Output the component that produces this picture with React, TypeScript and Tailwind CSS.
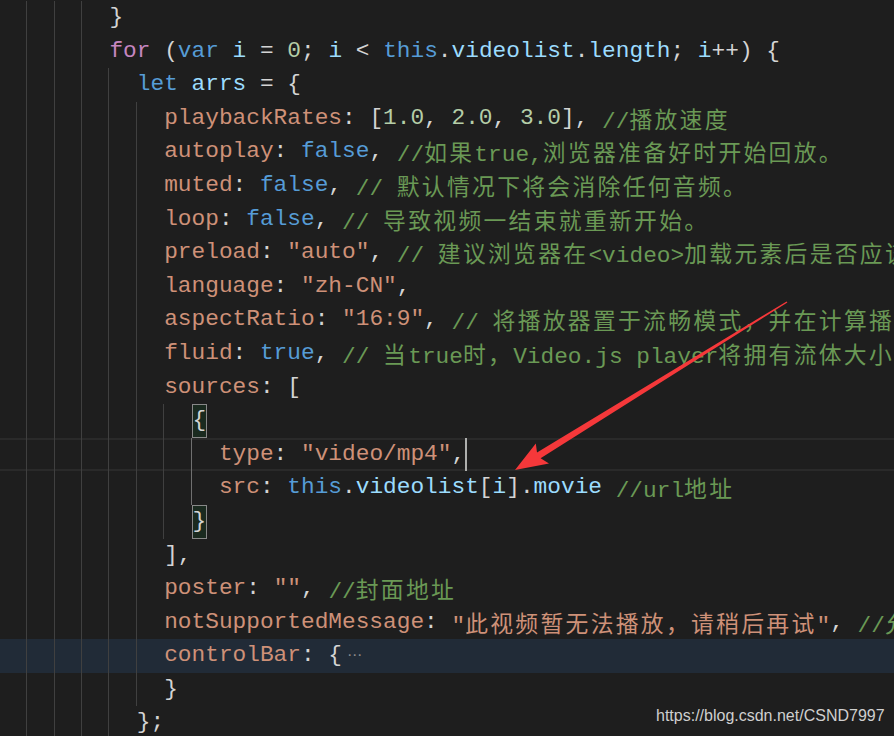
import React from "react";

const P = "text-[#d4d4d4]";
const K = "text-[#ce9178]";
const S = "text-[#ce9178]";
const B = "text-[#569cd6]";
const F = "text-[#c586c0]";
const V = "text-[#9cdcfe]";
const N = "text-[#b5cea8]";
const C = "text-[#6a9955]";

type Tok = [string, string];

type Line = {
  indent: number; // in 2-space levels
  toks: Tok[];
  activeGuide?: number; // level index of active guide
  current?: boolean;
  folded?: boolean;
  bracketBox?: string;
  cursor?: boolean;
};

const CJK_RE = /([\u3000-\u303f\u4e00-\u9fff\uff00-\uffef]+)/;

function renderText(text: string) {
  const parts = text.split(CJK_RE);
  return parts.map((p, i) =>
    CJK_RE.test(p) ? (
      <span
        key={i}
        className="tracking-[2.3px] font-['Noto_Sans_CJK_SC','Liberation_Mono',sans-serif]"
      >
        {p}
      </span>
    ) : (
      <React.Fragment key={i}>{p}</React.Fragment>
    )
  );
}

const lines: Line[] = [
  { indent: 4, toks: [[P, "}"]] },
  {
    indent: 4,
    toks: [
      [F, "for"],
      [P, " ("],
      [B, "var"],
      [P, " "],
      [V, "i"],
      [P, " = "],
      [N, "0"],
      [P, "; "],
      [V, "i"],
      [P, " < "],
      [B, "this"],
      [P, "."],
      [V, "videolist"],
      [P, "."],
      [V, "length"],
      [P, "; "],
      [V, "i"],
      [P, "++) {"],
    ],
  },
  {
    indent: 5,
    toks: [
      [B, "let"],
      [P, " "],
      [V, "arrs"],
      [P, " = {"],
    ],
  },
  {
    indent: 6,
    toks: [
      [K, "playbackRates"],
      [P, ": ["],
      [N, "1.0"],
      [P, ", "],
      [N, "2.0"],
      [P, ", "],
      [N, "3.0"],
      [P, "], "],
      [C, "//播放速度"],
    ],
  },
  {
    indent: 6,
    toks: [
      [K, "autoplay"],
      [P, ": "],
      [B, "false"],
      [P, ", "],
      [C, "//如果true,浏览器准备好时开始回放。"],
    ],
  },
  {
    indent: 6,
    toks: [
      [K, "muted"],
      [P, ": "],
      [B, "false"],
      [P, ", "],
      [C, "// 默认情况下将会消除任何音频。"],
    ],
  },
  {
    indent: 6,
    toks: [
      [K, "loop"],
      [P, ": "],
      [B, "false"],
      [P, ", "],
      [C, "// 导致视频一结束就重新开始。"],
    ],
  },
  {
    indent: 6,
    toks: [
      [K, "preload"],
      [P, ": "],
      [S, '"auto"'],
      [P, ", "],
      [C, "// 建议浏览器在<video>加载元素后是否应该开始下载视频数据。"],
    ],
  },
  {
    indent: 6,
    toks: [
      [K, "language"],
      [P, ": "],
      [S, '"zh-CN"'],
      [P, ","],
    ],
  },
  {
    indent: 6,
    toks: [
      [K, "aspectRatio"],
      [P, ": "],
      [S, '"16:9"'],
      [P, ", "],
      [C, "// 将播放器置于流畅模式，并在计算播放器的动态大小时使用该值。"],
    ],
  },
  {
    indent: 6,
    toks: [
      [K, "fluid"],
      [P, ": "],
      [B, "true"],
      [P, ", "],
      [C, "// 当true时，Video.js player将拥有流体大小。换句话说，它将按比例缩放以适应其容器。"],
    ],
  },
  {
    indent: 6,
    toks: [
      [K, "sources"],
      [P, ": ["],
    ],
  },
  { indent: 7, toks: [], bracketBox: "{" },
  {
    indent: 8,
    activeGuide: 7,
    current: true,
    cursor: true,
    toks: [
      [K, "type"],
      [P, ": "],
      [S, '"video/mp4"'],
      [P, ","],
    ],
  },
  {
    indent: 8,
    activeGuide: 7,
    toks: [
      [K, "src"],
      [P, ": "],
      [B, "this"],
      [P, "."],
      [V, "videolist"],
      [P, "["],
      [V, "i"],
      [P, "]."],
      [V, "movie"],
      [P, " "],
      [C, "//url地址"],
    ],
  },
  { indent: 7, toks: [], bracketBox: "}" },
  { indent: 6, toks: [[P, "],"]] },
  {
    indent: 6,
    toks: [
      [K, "poster"],
      [P, ": "],
      [S, '""'],
      [P, ", "],
      [C, "//封面地址"],
    ],
  },
  {
    indent: 6,
    toks: [
      [K, "notSupportedMessage"],
      [P, ": "],
      [S, '"此视频暂无法播放，请稍后再试"'],
      [P, ", "],
      [C, "//允许覆盖Video.js无法播放媒体源时显示的默认信息。"],
    ],
  },
  {
    indent: 6,
    folded: true,
    toks: [
      [K, "controlBar"],
      [P, ": {"],
    ],
  },
  { indent: 6, toks: [[P, "}"]] },
  { indent: 5, toks: [[P, "};"]] },
];

function CodeLine({ line }: { line: Line }) {
  const rowCls = [
    "flex shrink-0 h-[33.6px] leading-[33.6px] whitespace-pre",
    line.current ? "shadow-[inset_0_2px_0_#2a2a2a,inset_0_-2px_0_#2a2a2a]" : "",
    line.folded ? "bg-[#212b37]" : "",
  ].join(" ");
  const guides = [];
  for (let lv = 0; lv < line.indent; lv++) {
    const active = line.activeGuide === lv;
    guides.push(
      <span
        key={lv}
        className={
          lv === 0
            ? "inline-block shrink-0 w-[2ch] h-full"
            : active
            ? "inline-block shrink-0 w-[2ch] h-full border-l border-[#707070] -ml-px mr-px"
            : "inline-block shrink-0 w-[2ch] h-full border-l border-[#404040] -ml-px mr-px"
        }
      />
    );
  }
  return (
    <div className={rowCls}>
      {guides}
      {line.bracketBox && (
        <span className="inline-block h-full border border-[#888888] bg-[#1a2a1f] leading-[31.6px] text-[#d4d4d4]">
          {line.bracketBox}
        </span>
      )}
      {line.toks.map(([cls, t], i) => (
        <span key={i} className={cls}>
          {renderText(t)}
        </span>
      ))}
      {line.cursor && <span className="inline-block w-[2px] h-full bg-[#aeafad]" />}
      {line.folded && (
        <span className="text-[#8a8a8a] text-[15px] ml-[5px] font-['DejaVu_Sans',sans-serif]">⋯</span>
      )}
    </div>
  );
}

export default function App() {
  return (
    <div className="relative w-[894px] h-[736px] overflow-hidden bg-[#1e1e1e] font-['Liberation_Mono','Noto_Sans_CJK_SC',monospace] text-[22.8px]">
      <div className="flex flex-col pt-px">
        {lines.map((l, i) => (
          <CodeLine key={i} line={l} />
        ))}
      </div>

      <svg
        className="absolute left-0 top-0 pointer-events-none"
        width="894"
        height="736"
        viewBox="0 0 894 736"
      >
        <polygon
          points="515,470 549,463.5 540.6,458.2 787.4,302.6 786.6,301.4 537,452.4 535.8,443.6"
          fill="#f5383a"
        />
      </svg>

      <div className="absolute left-[656px] top-[706px] leading-[20px] text-[16px] text-[#cfcfcf] font-['Liberation_Sans',Arial,sans-serif] whitespace-nowrap">
        https://blog.csdn.net/CSND7997
      </div>
    </div>
  );
}
